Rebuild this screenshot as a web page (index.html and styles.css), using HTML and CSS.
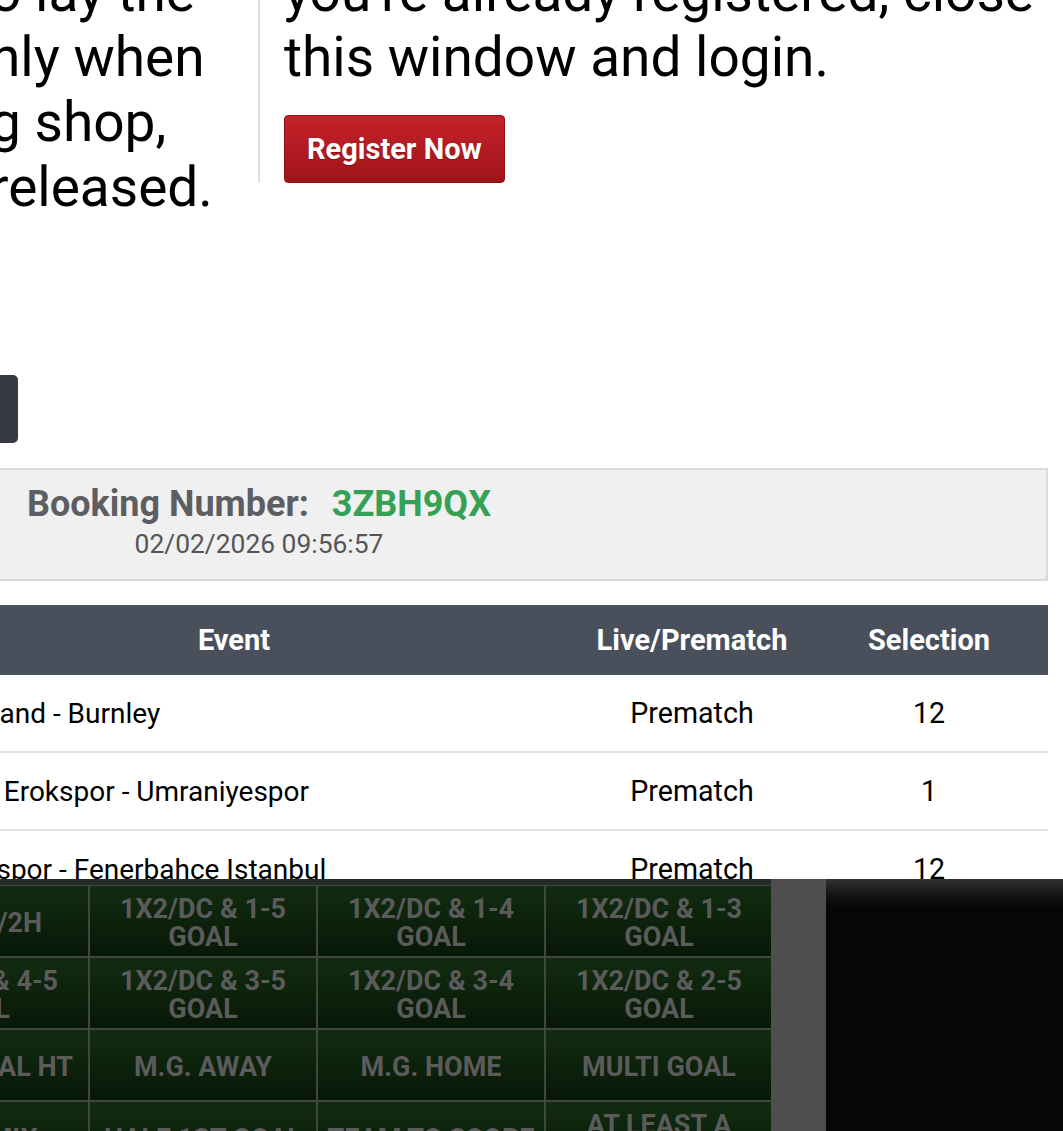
FILE: index.html
```html
<!DOCTYPE html>
<html lang="en">
<head>
<meta charset="utf-8">
<title>Booking</title>
<link rel="stylesheet" href="styles.css">
</head>
<body>
<div class="page">
  <section class="intro">
    <div class="intro-left">o lay the<br>nly when<br>g shop,<br>released.</div>
    <div class="intro-right">
      <div class="intro-text">you're already registered, close<br>this window and login.</div>
      <button class="btn-register">Register Now</button>
    </div>
  </section>

  <div class="actions">
    <button class="btn-dark">Print</button>
  </div>

  <div class="booking">
    <div class="booking-info">
      <div class="booking-line"><span class="booking-label">Booking Number:</span><span class="booking-code">3ZBH9QX</span></div>
      <div class="booking-date">02/02/2026 09:56:57</div>
    </div>
  </div>

  <table class="events">
    <thead>
      <tr><th class="col-event">Event</th><th class="col-live">Live/Prematch</th><th class="col-sel">Selection</th></tr>
    </thead>
    <tbody>
      <tr><td class="ev">Sunderland - Burnley</td><td>Prematch</td><td>12</td></tr>
      <tr><td class="ev">Esenler Erokspor - Umraniyespor</td><td>Prematch</td><td>1</td></tr>
      <tr><td class="ev">Kayserispor - Fenerbahce Istanbul</td><td>Prematch</td><td>12</td></tr>
      <tr><td class="ev">Rizespor - Galatasaray</td><td>Prematch</td><td>1</td></tr>
    </tbody>
  </table>
</div>

<div class="panel">
  <div class="panel-grid">
    <div class="cell">1X2 1H/2H</div>
    <div class="cell">1X2/DC &amp; 1-5<br>GOAL</div>
    <div class="cell">1X2/DC &amp; 1-4<br>GOAL</div>
    <div class="cell">1X2/DC &amp; 1-3<br>GOAL</div>
    <div class="cell">1X2/DC &amp; 4-5<br>GOAL</div>
    <div class="cell">1X2/DC &amp; 3-5<br>GOAL</div>
    <div class="cell">1X2/DC &amp; 3-4<br>GOAL</div>
    <div class="cell">1X2/DC &amp; 2-5<br>GOAL</div>
    <div class="cell">MULTI GOAL HT</div>
    <div class="cell">M.G. AWAY</div>
    <div class="cell">M.G. HOME</div>
    <div class="cell">MULTI GOAL</div>
    <div class="cell">GOAL MIX</div>
    <div class="cell">HALF 1ST GOAL</div>
    <div class="cell">TEAM TO SCORE</div>
    <div class="cell">AT LEAST A<br>GOAL</div>
  </div>
  <div class="panel-strip"></div>
  <div class="panel-dark"></div>
</div>
</body>
</html>
```

FILE: styles.css
```css
html, body {
  margin: 0;
  padding: 0;
  background: #fff;
  overflow: hidden;
  height: 1131px;
}

body {
  font-family: Roboto, "Noto Sans", "Liberation Sans", sans-serif;
  color: #000;
}

.page {
  margin-left: -106px;
  width: 1154px;
}

/* intro */
.intro {
  display: flex;
  align-items: flex-start;
  margin-top: -40px;
}

.intro-left {
  width: 268px;
  padding-left: 96px;
  font-size: 55px;
  line-height: 65px;
  white-space: nowrap;
}

.intro-right {
  border-left: 2px solid #dedede;
  padding-left: 24px;
}

.intro-text {
  font-size: 55px;
  line-height: 65px;
  white-space: nowrap;
}

.btn-register {
  display: block;
  margin-top: 25px;
  height: 68px;
  padding: 0 22px;
  border: 1px solid #8d1016;
  border-radius: 4px;
  background: linear-gradient(#c4222a, #a0141a);
  color: #fff;
  font-family: Roboto, "Liberation Sans", sans-serif;
  font-weight: 700;
  font-size: 29px;
  line-height: 34px;
  text-shadow: 0 1px 1px rgba(0,0,0,0.25);
}

/* actions */
.actions {
  margin-top: 155px;
  display: flex;
}

.btn-dark {
  margin-left: -126px;
  width: 250px;
  height: 68px;
  border: 0;
  border-radius: 5px;
  background: #363b41;
  color: #fff;
  font-family: Roboto, sans-serif;
  font-weight: 700;
  font-size: 29px;
}

/* booking */
.booking {
  margin-top: 25px;
  background: #f0f0f0;
  border: 2px solid #dadada;
  padding: 14px 0 19px;
}

.booking-info {
  width: 726px;
  text-align: center;
}

.booking-line {
  height: 40px;
  line-height: 40px;
  font-size: 36px;
  font-weight: 700;
}

.booking-label {
  color: #5d5e62;
}

.booking-code {
  color: #35a155;
  margin-left: 23px;
}

.booking-date {
  margin-top: 4px;
  font-size: 26.4px;
  line-height: 32px;
  color: #555;
}

/* table */
.events {
  margin-top: 24px;
  width: 1154px;
  border-collapse: collapse;
  table-layout: fixed;
  font-size: 28.6px;
}

.events th {
  height: 70px;
  padding: 0;
  background: #4a505b;
  color: #fff;
  font-weight: 700;
  font-size: 29px;
  text-align: center;
}

.col-event { width: 680px; }
.col-live { width: 236px; }
.col-sel { width: 238px; }

.events td {
  height: 76px;
  padding: 0;
  border-bottom: 2px solid #e3e3e3;
  text-align: center;
  white-space: nowrap;
}

.events td.ev {
  text-align: left;
  padding-left: 11px;
  font-size: 28px;
}

/* bottom panel overlay */
.panel {
  position: fixed;
  left: 0;
  right: 0;
  top: 879px;
  bottom: 0;
  display: flex;
  background: #070707;
  overflow: hidden;
}

.panel-grid {
  flex: none;
  width: 909px;
  margin-left: -138px;
  padding-top: 7px;
  background: linear-gradient(#262a26 0, #262a26 6px, #3f473e 6px);
  display: grid;
  grid-template-columns: repeat(4, 226px);
  grid-auto-rows: 70px;
  gap: 2px;
}

.cell {
  display: flex;
  align-items: center;
  justify-content: center;
  padding-top: 4px;
  text-align: center;
  background: linear-gradient(#112c10, #081807);
  color: #5b5b5b;
  font-weight: 700;
  font-size: 27px;
  line-height: 28px;
  white-space: nowrap;
}

.panel-strip {
  width: 55px;
  flex: none;
  background: #4e4e4e;
}

.panel-dark {
  flex: 1;
  background: linear-gradient(#313131 0, #101010 18px, #070707 30px);
}
```
